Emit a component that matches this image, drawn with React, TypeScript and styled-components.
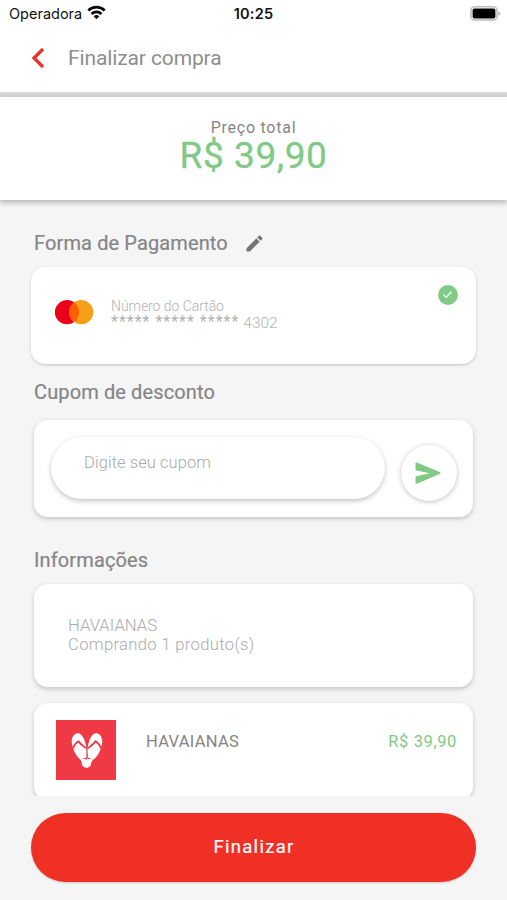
import React from "react";
import styled, { createGlobalStyle } from "styled-components";

const GREEN = "#80ca85";
const RED = "#f03024";

const GlobalStyle = createGlobalStyle`
  * { box-sizing: border-box; }
  body { margin: 0; background: #f5f5f5; }
`;

const Screen = styled.div`
  width: 507px;
  height: 900px;
  display: flex;
  flex-direction: column;
  overflow: hidden;
  background: #f5f5f5;
  font-family: Roboto, "Liberation Sans", sans-serif;
`;

const StatusBar = styled.div`
  height: 28px;
  flex: none;
  display: grid;
  grid-template-columns: 1fr auto 1fr;
  align-items: center;
  padding: 0 6px 0 9px;
  background: #fff;
  color: #111;
  font-family: Inter, sans-serif;
  font-size: 14.5px;
  line-height: 28px;
`;

const Carrier = styled.div`
  display: flex;
  align-items: center;
  gap: 5px;

  svg {
    margin-bottom: 3px;
  }
`;

const Clock = styled.div`
  padding-right: 3px;
  font-size: 14.5px;
  font-weight: 600;
  letter-spacing: 0.2px;
`;

const BatterySlot = styled.div`
  display: flex;
  justify-content: flex-end;
  margin-bottom: 2px;
`;

const Header = styled.header`
  height: 64px;
  flex: none;
  display: flex;
  align-items: center;
  padding: 0 0 4px 31px;
  gap: 21px;
  background: #fff;
`;

const Divider = styled.div`
  height: 5px;
  flex: none;
  background: linear-gradient(#dcdcdc, #d1d1d1 40%, #d5d5d5);
`;

const BackButton = styled.button`
  display: flex;
  padding: 0;
  border: 0;
  background: none;
`;

const Title = styled.h1`
  margin: 0;
  font-size: 21px;
  font-weight: 400;
  line-height: 24px;
  letter-spacing: -0.12px;
  color: #8e8e8e;
`;

const PricePanel = styled.section`
  position: relative;
  height: 103px;
  flex: none;
  display: flex;
  flex-direction: column;
  align-items: center;
  padding-top: 21px;
  background: #fff;
  box-shadow: 0 3px 5px rgba(0, 0, 0, 0.24);
`;

const PriceLabel = styled.div`
  font-size: 16px;
  line-height: 19px;
  letter-spacing: 0.75px;
  color: #858585;
`;

const PriceValue = styled.div`
  font-size: 37px;
  font-weight: 400;
  line-height: 37px;
  letter-spacing: 0.6px;
  color: ${GREEN};
  -webkit-text-stroke: 0.3px ${GREEN};
`;

const Content = styled.main`
  height: 596px;
  flex: none;
  overflow: hidden;
  display: flex;
  flex-direction: column;
  padding: 30px 31px 0;
`;

const SectionTitle = styled.h2<{ $top?: number; $bottom: number }>`
  display: flex;
  align-items: center;
  gap: 18px;
  height: 26px;
  flex: none;
  margin: ${(p) => p.$top ?? 0}px 0 ${(p) => p.$bottom}px 3px;
  font-size: 20px;
  font-weight: 400;
  line-height: 26px;
  letter-spacing: 0.12px;
  color: #858585;
  -webkit-text-stroke: 0.2px #858585;
`;

const Card = styled.section<{ $height: number; $wide?: boolean }>`
  display: flex;
  flex: none;
  height: ${(p) => p.$height}px;
  margin: 0 ${(p) => (p.$wide ? "0" : "3px")};
  border-radius: 14px;
  background: #fff;
  box-shadow: ${(p) =>
    p.$wide ? "0 1px 3px rgba(0, 0, 0, 0.2)" : "0 2px 5px rgba(0, 0, 0, 0.2)"};
`;

const PaymentCard = styled(Card)`
  padding: 18px 18px 0 23px;
`;

const BrandMark = styled.div`
  padding-top: 15px;
`;

const CardNumber = styled.div`
  flex: 1;
  padding: 13px 0 0 17px;
  color: #b2b2b2;
  font-weight: 300;
`;

const CardLabel = styled.div`
  font-size: 14px;
  line-height: 16px;
  letter-spacing: -0.05px;
`;

const Digits = styled.div`
  display: flex;
  gap: 4px;
  line-height: 16px;
`;

const Mask = styled.span`
  font-size: 16px;
  font-weight: 400;
  letter-spacing: 1px;
`;

const LastDigits = styled.span`
  padding-top: 1px;
  font-size: 15.5px;
`;

const CouponCard = styled(Card)`
  padding: 17px 16px 0 17px;
  gap: 16px;
`;

const CouponInput = styled.input`
  width: 334px;
  height: 62px;
  padding: 0 33px 12px;
  border: 0;
  border-radius: 31px;
  background: #fff;
  box-shadow: 0 2px 5px rgba(0, 0, 0, 0.24);
  font-family: Roboto, sans-serif;
  font-size: 16.5px;
  font-weight: 300;
  letter-spacing: 0.07px;

  &::placeholder {
    color: #a8a8a8;
    opacity: 1;
  }
`;

const SendButton = styled.button`
  width: 56px;
  height: 56px;
  margin-top: 8px;
  padding: 0 2px 0 0;
  display: flex;
  align-items: center;
  justify-content: center;
  border: 0;
  border-radius: 50%;
  background: #fff;
  box-shadow: 0 1px 5px rgba(0, 0, 0, 0.25);
`;

const InfoCard = styled(Card)`
  flex-direction: column;
  padding: 32px 34px;
  margin-bottom: 16px;
  color: #ababab;
  font-size: 16.7px;
  font-weight: 300;
  line-height: 19px;
`;

const InfoLine = styled.div<{ $spacing: number }>`
  letter-spacing: ${(p) => p.$spacing}px;
`;

const ProductCard = styled(Card)`
  padding: 17px 16px 0 22px;
  font-size: 16.5px;
  line-height: 20px;
`;

const ProductName = styled.div`
  flex: 1;
  padding: 12px 0 0 30px;
  letter-spacing: 0.3px;
  color: #858585;
`;

const ProductPrice = styled.div`
  padding-top: 12px;
  letter-spacing: 0.6px;
  color: ${GREEN};
`;

const Footer = styled.footer`
  padding: 17px 31px 0;
`;

const FinishButton = styled.button`
  width: 100%;
  height: 69px;
  padding: 0 0 2px 1px;
  border: 0;
  border-radius: 35px;
  background: ${RED};
  box-shadow: 0 1px 2px rgba(0, 0, 0, 0.18);
  color: #fff;
  font-family: Roboto, sans-serif;
  font-size: 18.5px;
  font-weight: 400;
  letter-spacing: 1.3px;
  -webkit-text-stroke: 0.2px #fff;
`;

const WifiIcon = () => (
  <svg width="19" height="15" viewBox="0 0 19 15" fill="none" stroke="#0a0a0a" strokeWidth="2.7">
    <path d="M1.3 5.5a11.9 11.9 0 0 1 16.4 0" />
    <path d="M4.5 8.9a7.3 7.3 0 0 1 10 0" />
    <path d="M9.5 14.2 6.7 11.4a4 4 0 0 1 5.6 0z" fill="#0a0a0a" stroke="none" />
  </svg>
);

const BatteryIcon = () => (
  <svg width="31" height="15" viewBox="0 0 31 15">
    <rect x="1" y=".8" width="26" height="13.2" rx="3.8" fill="#fff" stroke="#bcbcbc" strokeWidth="1.6" />
    <rect x="2.6" y="2.4" width="22.8" height="10" rx="2" fill="#000" />
    <path d="M28.4 5.2q2 .8 2 2.300t-2 2.300z" fill="#b5b5b5" />
  </svg>
);

const BackIcon = () => (
  <svg width="16" height="22" viewBox="0 0 16 22" fill="none" stroke={RED} strokeWidth="3.2">
    <path d="M12 2 3 11l9 9" />
  </svg>
);

const PencilIcon = () => (
  <svg width="17" height="17" viewBox="2.4 2.4 19.2 19.2" fill="#747474">
    <path d="M3 17.25V21h3.75L17.81 9.94l-3.75-3.75zM20.71 7.04a1 1 0 0 0 0-1.41l-2.34-2.34a1 1 0 0 0-1.41 0l-1.83 1.83 3.75 3.75z" />
  </svg>
);

const MastercardLogo = () => (
  <svg width="40" height="26" viewBox="0 0 40 26">
    <circle cx="13" cy="12.2" r="12.1" fill="#eb001b" />
    <circle cx="27.2" cy="12.2" r="12.1" fill="#f79e1b" />
    <path d="M20.1 2.400a12.100 12.100 0 0 1 0 19.600 12.100 12.100 0 0 1 0-19.600" fill="#ff5f00" />
  </svg>
);

const CheckIcon = () => (
  <svg width="20" height="20" viewBox="0 0 20 20">
    <circle cx="10" cy="10" r="9.9" fill={GREEN} />
    <path d="m5.4 9.5 2.700 3 5.400-6" fill="none" stroke="#e9f7ea" strokeWidth="1.5" />
  </svg>
);

const SendIcon = () => (
  <svg width="26" height="23" viewBox="0 0 26 23" fill={GREEN}>
    <path d="M.5 1.200Q.5 0 1.800.5L24.700 10q1.600.900 0 1.900L1.800 21.700q-1.300.5-1.300-.8v-6.400l14-3.300L.5 8.300z" />
  </svg>
);

const SandalsLogo = () => (
  <svg width="60" height="60" viewBox="0 0 60 60">
    <path d="M0 0h60v60H0z" fill="#ef3945" />
    <g fill="#fff">
      <path d="M30 25.500C28.500 18 25.500 12.800 21.500 13.200c-4 .5-6.300 5-5.700 9.600.9 6.500 4.200 13 8.200 16.600l6.600-1.900c.8-4.500.5-8-.6-12z" />
      <path d="M32 25.500c1.500-7.500 4.500-12.700 8.500-12.300 4 .5 6.300 5 5.700 9.600-.9 6.500-4.200 13-8.200 16.600l-6.600-1.900c-.8-4.500-.5-8 .6-12z" />
      <path d="m23.800 37.800 5.600 1.500 1.700-1.800 1.600 1.800 5.300-1.500-2.700 4.500c0 3-1.500 5.500-5 5.500-3.300 0-4.500-2.500-4.600-5.200z" />
    </g>
    <g fill="none" stroke="#ef3945" strokeLinejoin="round">
      <path d="M17 28.200c1.200-3.200 3.200-5.600 5.600-7 1.800 3.200 4.800 5 7.400 7M45 28.200c-1.200-3.200-3.200-5.600-5.600-7-1.800 3.200-4.800 5-7.400 7" strokeWidth="1.8" />
      <path d="M31 24v9q1 4-1 6.500" strokeWidth="1.200" />
    </g>
  </svg>
);

export default function App() {
  return (
    <Screen>
      <GlobalStyle />
      <StatusBar>
        <Carrier>
          Operadora
          <WifiIcon />
        </Carrier>
        <Clock>10:25</Clock>
        <BatterySlot>
          <BatteryIcon />
        </BatterySlot>
      </StatusBar>
      <Header>
        <BackButton aria-label="Voltar">
          <BackIcon />
        </BackButton>
        <Title>Finalizar compra</Title>
      </Header>
      <Divider />
      <PricePanel>
        <PriceLabel>Preço total</PriceLabel>
        <PriceValue>R$ 39,90</PriceValue>
      </PricePanel>
      <Content>
        <SectionTitle $bottom={11}>
          Forma de Pagamento
          <PencilIcon />
        </SectionTitle>
        <PaymentCard $height={97} $wide>
          <BrandMark>
            <MastercardLogo />
          </BrandMark>
          <CardNumber>
            <CardLabel>Número do Cartão</CardLabel>
            <Digits>
              <Mask>***** ***** *****</Mask>
              <LastDigits>4302</LastDigits>
            </Digits>
          </CardNumber>
          <CheckIcon />
        </PaymentCard>
        <SectionTitle $top={15} $bottom={15}>
          Cupom de desconto
        </SectionTitle>
        <CouponCard $height={97}>
          <CouponInput placeholder="Digite seu cupom" />
          <SendButton aria-label="Enviar">
            <SendIcon />
          </SendButton>
        </CouponCard>
        <SectionTitle $top={30} $bottom={11}>
          Informações
        </SectionTitle>
        <InfoCard $height={103}>
          <InfoLine $spacing={0}>HAVAIANAS</InfoLine>
          <InfoLine $spacing={0.3}>Comprando 1 produto(s)</InfoLine>
        </InfoCard>
        <ProductCard $height={97}>
          <SandalsLogo />
          <ProductName>HAVAIANAS</ProductName>
          <ProductPrice>R$ 39,90</ProductPrice>
        </ProductCard>
      </Content>
      <Footer>
        <FinishButton>Finalizar</FinishButton>
      </Footer>
    </Screen>
  );
}
